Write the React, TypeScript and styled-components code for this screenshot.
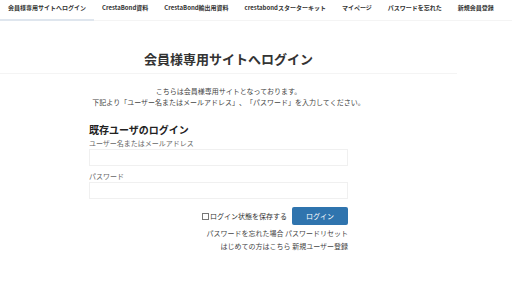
import React from 'react';
import styled, { createGlobalStyle } from 'styled-components';

const GlobalStyle = createGlobalStyle`
  body {
    margin: 0;
    background: #fff;
    font-family: "Noto Sans CJK JP", "Noto Sans", sans-serif;
    color: #333;
    text-spacing-trim: space-all;
  }
`;

const Nav = styled.nav`
  display: flex;
  border-bottom: 1px solid #f4f4f4;
`;

const NavItem = styled.a<{ $active?: boolean }>`
  display: block;
  padding: 3px 8px 7px;
  font-size: 6px;
  line-height: 9px;
  font-weight: bold;
  color: #333;
  white-space: nowrap;
  border-bottom: 2px solid ${p => (p.$active ? '#dfe6ee' : 'transparent')};
  margin-bottom: -1px;
`;

const Main = styled.main`
  width: 457px;
`;

const Title = styled.h1`
  margin: 0;
  padding: 28px 0 5px;
  text-align: center;
  font-size: 13px;
  line-height: 19px;
  font-weight: bold;
  color: #333;
  border-bottom: 1px solid #f4f4f4;
`;

const Intro = styled.div`
  padding-top: 12px;
  text-align: center;
  font-size: 7px;
  line-height: 11px;
  color: #444;
`;

const Form = styled.form`
  width: 259px;
  margin: 15px 0 0 89px;
  display: flex;
  flex-direction: column;
`;

const FormTitle = styled.h2`
  margin: 0 0 1px;
  font-size: 10px;
  line-height: 14px;
  font-weight: bold;
  color: #222;
`;

const Label = styled.label`
  font-size: 7px;
  color: #666;
  line-height: 11px;
`;

const Input = styled.input`
  box-sizing: border-box;
  width: 259px;
  height: 17px;
  margin: 0 0 5px;
  border: 1px solid #f0f0f0;
  padding: 0 4px;
  outline: none;
`;

const Actions = styled.div`
  display: flex;
  justify-content: flex-end;
  align-items: center;
  gap: 5px;
  margin-top: 3px;
`;

const Remember = styled.label`
  display: flex;
  align-items: center;
  gap: 1px;
  font-size: 7px;
  color: #333;
`;

const Box = styled.span`
  display: inline-block;
  width: 5px;
  height: 5px;
  border: 1px solid #777;
`;

const Button = styled.button`
  width: 56px;
  height: 18px;
  border: none;
  border-radius: 2px;
  background: #2f74ae;
  color: #fff;
  font-family: inherit;
  font-size: 7px;
  padding: 0;
`;

const Links = styled.div`
  margin-top: 2px;
`;

const LinkRow = styled.div`
  text-align: right;
  font-size: 7px;
  color: #444;
  line-height: 13px;
`;

const navItems = [
  '会員様専用サイトへログイン',
  'CrestaBond資料',
  'CrestaBond輸出用資料',
  'crestabondスターターキット',
  'マイページ',
  'パスワードを忘れた',
  '新規会員登録',
];

export default function App() {
  return (
    <>
      <GlobalStyle />
      <Nav>
        {navItems.map((n, i) => (
          <NavItem key={n} $active={i === 0}>{n}</NavItem>
        ))}
      </Nav>
      <Main>
        <Title>会員様専用サイトへログイン</Title>
        <Intro>
          こちらは会員様専用サイトとなっております。
          <br />
          下記より「ユーザー名またはメールアドレス」、「パスワード」を入力してください。
        </Intro>
        <Form>
          <FormTitle>既存ユーザのログイン</FormTitle>
          <Label>ユーザー名またはメールアドレス</Label>
          <Input type="text" />
          <Label>パスワード</Label>
          <Input type="password" />
          <Actions>
            <Remember><Box />ログイン状態を保存する</Remember>
            <Button type="button">ログイン</Button>
          </Actions>
          <Links>
            <LinkRow>パスワードを忘れた場合 パスワードリセット</LinkRow>
            <LinkRow>はじめての方はこちら 新規ユーザー登録</LinkRow>
          </Links>
        </Form>
      </Main>
    </>
  );
}
